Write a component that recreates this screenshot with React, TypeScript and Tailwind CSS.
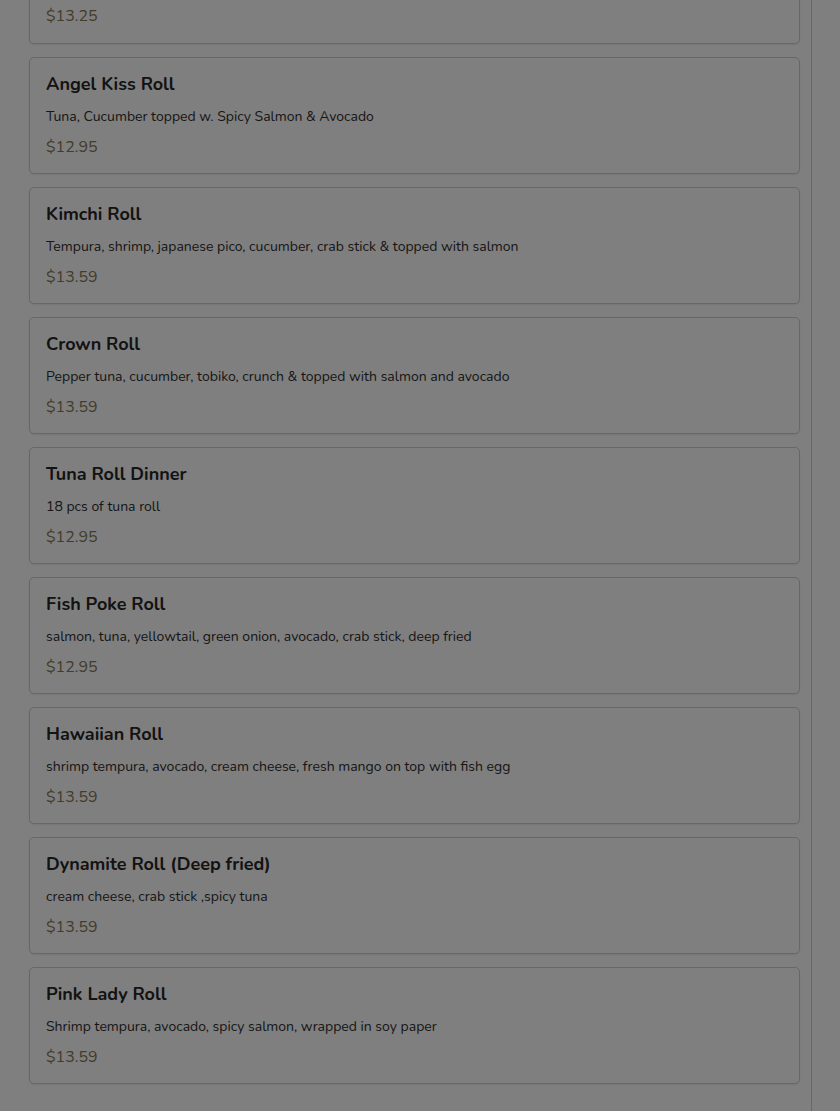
import React from 'react';

interface MenuItem {
  name: string;
  desc: string;
  price: string;
}

// first card is scrolled mostly out of view, only its price shows
const ITEMS: MenuItem[] = [
  { name: 'Angel Kiss Roll', desc: 'Tuna, Cucumber topped w. Spicy Salmon & Avocado', price: '$12.95' },
  { name: 'Kimchi Roll', desc: 'Tempura, shrimp, japanese pico, cucumber, crab stick & topped with salmon', price: '$13.59' },
  { name: 'Crown Roll', desc: 'Pepper tuna, cucumber, tobiko, crunch & topped with salmon and avocado', price: '$13.59' },
  { name: 'Tuna Roll Dinner', desc: '18 pcs of tuna roll', price: '$12.95' },
  { name: 'Fish Poke Roll', desc: 'salmon, tuna, yellowtail, green onion, avocado, crab stick, deep fried', price: '$12.95' },
  { name: 'Hawaiian Roll', desc: 'shrimp tempura, avocado, cream cheese, fresh mango on top with fish egg', price: '$13.59' },
  { name: 'Dynamite Roll (Deep fried)', desc: 'cream cheese, crab stick ,spicy tuna', price: '$13.59' },
  { name: 'Pink Lady Roll', desc: 'Shrimp tempura, avocado, spicy salmon, wrapped in soy paper', price: '$13.59' },
];

const Price: React.FC<{ value: string }> = ({ value }) => (
  <div className="text-[16px] leading-5 text-[#867853]">{value}</div>
);

const MenuCard: React.FC<{ item: MenuItem }> = ({ item }) => (
  <div className="rounded-[5px] border border-[#cfcfcf] bg-white px-4 pt-4 pb-4 shadow-[0_1px_2px_rgba(0,0,0,0.08)]">
    <div className="text-[18px] leading-5 font-bold text-[#262626]">{item.name}</div>
    <div className="mt-[13px] text-[14px] leading-5 text-[#2e2e2e]">{item.desc}</div>
    <div className="mt-[10px]">
      <Price value={item.price} />
    </div>
  </div>
);

export default function App() {
  return (
    <div className="relative h-[1111px] overflow-hidden bg-white" style={{ fontFamily: '"Nunito", "Open Sans", "Noto Sans", sans-serif' }}>
      <div className="flex h-full">
        <div className="h-full w-[812px] shrink-0 border-r border-[#cfcfcf] pl-[29px] pr-[11px]">
          <div className="flex flex-col gap-[13px]">
            <div className="mt-[-10px] rounded-b-[5px] border border-t-0 border-[#cfcfcf] bg-white px-4 pt-4 pb-[17px] shadow-[0_1px_2px_rgba(0,0,0,0.08)]">
              <Price value="$13.25" />
            </div>
            {ITEMS.map((item) => (
              <MenuCard key={item.name} item={item} />
            ))}
          </div>
        </div>
        <div className="flex-1" />
      </div>
      {/* modal backdrop */}
      <div className="absolute inset-0 bg-black/50" />
    </div>
  );
}
